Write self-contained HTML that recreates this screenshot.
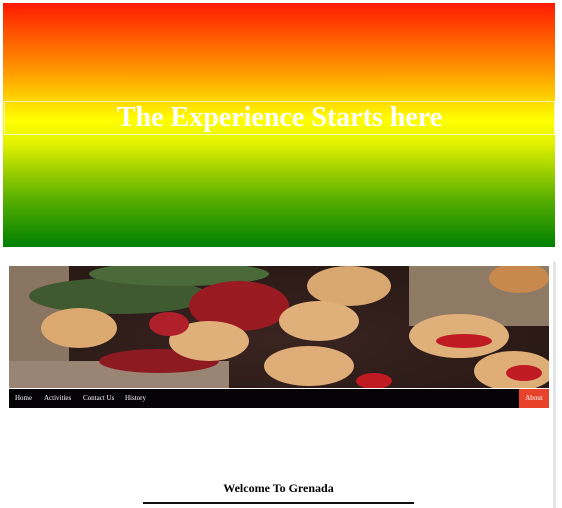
<!DOCTYPE html>
<html><head><meta charset="utf-8"><style>
html,body{margin:0;padding:0;background:#fff;width:562px;height:508px;overflow:hidden;position:relative;font-family:"Liberation Serif",serif}
.hero{position:absolute;left:3px;top:3px;width:552px;height:244px;background:linear-gradient(to bottom,#ff1a00 0%,#ff9a00 28%,#ffff00 48%,#e0f000 58%,#5ab000 80%,#008000 100%)}
.tb{position:absolute;left:1px;top:98px;width:549px;height:32px;border:1px solid rgba(255,255,255,0.7);color:#fff;font-weight:bold;font-size:28px;text-align:center;line-height:32px}
.sb{position:absolute;left:553px;top:262px;width:3px;height:246px;background:#e4e4e4}
.img{position:absolute;left:9px;top:266px;width:540px;height:122px;overflow:hidden;background:radial-gradient(ellipse at 50% 60%,#3a2420,#2a1a16 70%)}
.nav{position:absolute;left:9px;top:389px;width:540px;height:19px;background:#050305;color:#fff;font-size:7px;line-height:19px}
.nav span{position:absolute}
.about{position:absolute;right:0;top:0;width:30px;height:19px;background:#e8432a;text-align:center}
.w{position:absolute;left:143px;top:481px;width:271px;text-align:center;font-weight:bold;font-size:12px}
.line{position:absolute;left:143px;top:502px;width:271px;height:2px;background:#111}
</style></head><body>
<div class="hero"><div class="tb">The Experience Starts here</div></div>
<div class="sb"></div>
<div class="img">
<svg width="540" height="122" viewBox="0 0 540 122">
<rect x="0" y="0" width="60" height="122" fill="#8a7462"/>
<rect x="400" y="0" width="140" height="60" fill="#8f7a66"/>
<rect x="0" y="95" width="220" height="27" fill="#9a8474"/>
<ellipse cx="110" cy="30" rx="90" ry="18" fill="#3f5a30"/>
<ellipse cx="170" cy="8" rx="90" ry="12" fill="#4a6a3a"/>
<ellipse cx="230" cy="40" rx="50" ry="25" fill="#9a1a22"/>
<ellipse cx="150" cy="95" rx="60" ry="12" fill="#8c1a20"/>
<ellipse cx="340" cy="20" rx="42" ry="20" fill="#d9a870"/>
<ellipse cx="310" cy="55" rx="40" ry="20" fill="#e0b07a"/>
<ellipse cx="70" cy="62" rx="38" ry="20" fill="#dcaa70"/>
<ellipse cx="200" cy="75" rx="40" ry="20" fill="#e0b07a"/>
<ellipse cx="300" cy="100" rx="45" ry="20" fill="#dfae78"/>
<ellipse cx="450" cy="70" rx="50" ry="22" fill="#e0b07a"/>
<ellipse cx="505" cy="105" rx="40" ry="20" fill="#deae76"/>
<ellipse cx="510" cy="12" rx="30" ry="15" fill="#c8894f"/>
<ellipse cx="455" cy="75" rx="28" ry="7" fill="#c01a22"/>
<ellipse cx="515" cy="107" rx="18" ry="8" fill="#c01a22"/>
<ellipse cx="365" cy="115" rx="18" ry="8" fill="#c01a22"/>
<ellipse cx="160" cy="58" rx="20" ry="12" fill="#b0202a"/>
</svg>
</div>
<div class="nav"><span style="left:6px">Home</span><span style="left:35px">Activities</span><span style="left:74px">Contact Us</span><span style="left:116px">History</span><div class="about">About</div></div>
<div class="w">Welcome To Grenada</div>
<div class="line"></div>
</body></html>
